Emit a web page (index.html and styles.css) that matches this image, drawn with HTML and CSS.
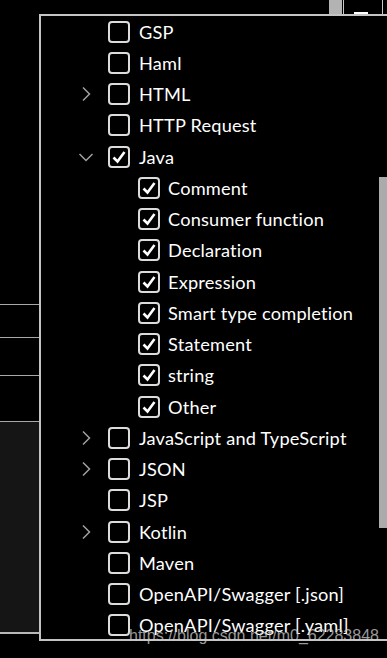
FILE: index.html
```html
<!DOCTYPE html>
<html>
<head>
<meta charset="utf-8">
<link rel="stylesheet" href="styles.css">
</head>
<body>
<div class="top">
  <span class="thumb-top"></span>
  <span class="vline"></span>
  <span class="minbar"></span>
  <span class="vline vline-r"></span>
</div>
<div class="main">
  <aside class="side">
    <div class="s s1"></div>
    <div class="s s2"></div>
    <div class="s s3"></div>
    <div class="s s4"></div>
    <div class="panel"></div>
  </aside>
  <div class="popup">
    <div class="row"><span class="chev"></span><span class="box"></span><span class="lbl">GSP</span></div>
    <div class="row"><span class="chev"></span><span class="box"></span><span class="lbl">Haml</span></div>
    <div class="row"><span class="chev"><svg width="10" height="16" viewBox="0 0 10 16"><path d="M2 1.5 L8.5 8 L2 14.5" fill="none" stroke="#a0a0a0" stroke-width="1.5"/></svg></span><span class="box"></span><span class="lbl">HTML</span></div>
    <div class="row"><span class="chev"></span><span class="box"></span><span class="lbl">HTTP Request</span></div>
    <div class="row"><span class="chev"><svg width="16" height="10" viewBox="0 0 16 10"><path d="M1.5 2 L8 8.5 L14.5 2" fill="none" stroke="#a0a0a0" stroke-width="1.5"/></svg></span><span class="box on"><svg width="18" height="18" viewBox="0 0 18 18"><path d="M3.5 9.5 L7.5 13.5 L14.5 4" fill="none" stroke="#fff" stroke-width="2.6"/></svg></span><span class="lbl">Java</span></div>
    <div class="row sub"><span class="box on"><svg width="18" height="18" viewBox="0 0 18 18"><path d="M3.5 9.5 L7.5 13.5 L14.5 4" fill="none" stroke="#fff" stroke-width="2.6"/></svg></span><span class="lbl">Comment</span></div>
    <div class="row sub"><span class="box on"><svg width="18" height="18" viewBox="0 0 18 18"><path d="M3.5 9.5 L7.5 13.5 L14.5 4" fill="none" stroke="#fff" stroke-width="2.6"/></svg></span><span class="lbl">Consumer function</span></div>
    <div class="row sub"><span class="box on"><svg width="18" height="18" viewBox="0 0 18 18"><path d="M3.5 9.5 L7.5 13.5 L14.5 4" fill="none" stroke="#fff" stroke-width="2.6"/></svg></span><span class="lbl">Declaration</span></div>
    <div class="row sub"><span class="box on"><svg width="18" height="18" viewBox="0 0 18 18"><path d="M3.5 9.5 L7.5 13.5 L14.5 4" fill="none" stroke="#fff" stroke-width="2.6"/></svg></span><span class="lbl">Expression</span></div>
    <div class="row sub"><span class="box on"><svg width="18" height="18" viewBox="0 0 18 18"><path d="M3.5 9.5 L7.5 13.5 L14.5 4" fill="none" stroke="#fff" stroke-width="2.6"/></svg></span><span class="lbl">Smart type completion</span></div>
    <div class="row sub"><span class="box on"><svg width="18" height="18" viewBox="0 0 18 18"><path d="M3.5 9.5 L7.5 13.5 L14.5 4" fill="none" stroke="#fff" stroke-width="2.6"/></svg></span><span class="lbl">Statement</span></div>
    <div class="row sub"><span class="box on"><svg width="18" height="18" viewBox="0 0 18 18"><path d="M3.5 9.5 L7.5 13.5 L14.5 4" fill="none" stroke="#fff" stroke-width="2.6"/></svg></span><span class="lbl">string</span></div>
    <div class="row sub"><span class="box on"><svg width="18" height="18" viewBox="0 0 18 18"><path d="M3.5 9.5 L7.5 13.5 L14.5 4" fill="none" stroke="#fff" stroke-width="2.6"/></svg></span><span class="lbl">Other</span></div>
    <div class="row"><span class="chev"><svg width="10" height="16" viewBox="0 0 10 16"><path d="M2 1.5 L8.5 8 L2 14.5" fill="none" stroke="#a0a0a0" stroke-width="1.5"/></svg></span><span class="box"></span><span class="lbl">JavaScript and TypeScript</span></div>
    <div class="row"><span class="chev"><svg width="10" height="16" viewBox="0 0 10 16"><path d="M2 1.5 L8.5 8 L2 14.5" fill="none" stroke="#a0a0a0" stroke-width="1.5"/></svg></span><span class="box"></span><span class="lbl">JSON</span></div>
    <div class="row"><span class="chev"></span><span class="box"></span><span class="lbl">JSP</span></div>
    <div class="row"><span class="chev"><svg width="10" height="16" viewBox="0 0 10 16"><path d="M2 1.5 L8.5 8 L2 14.5" fill="none" stroke="#a0a0a0" stroke-width="1.5"/></svg></span><span class="box"></span><span class="lbl">Kotlin</span></div>
    <div class="row"><span class="chev"></span><span class="box"></span><span class="lbl">Maven</span></div>
    <div class="row"><span class="chev"></span><span class="box"></span><span class="lbl">OpenAPI/Swagger [.json]</span></div>
    <div class="row"><span class="chev"></span><span class="box"></span><span class="lbl">OpenAPI/Swagger [.yaml]</span></div>
    <div class="scroll"></div>
  </div>
</div>
<div class="wm">https://blog.csdn.net/m0_62283848</div>
</body>
</html>
```
FILE: styles.css
```css
html, body {
  margin: 0;
  padding: 0;
  background: #000;
}
body {
  width: 387px;
  height: 658px;
  overflow: hidden;
  position: relative;
  font-family: Lato, "Noto Sans", sans-serif;
  color: #fff;
}
.top {
  height: 14px;
  display: flex;
  padding-left: 329px;
}
.thumb-top {
  width: 13px;
  height: 14px;
  background: #b3b3b3;
}
.vline {
  width: 1px;
  height: 14px;
  margin-left: 1px;
  background: #c8c8c8;
}
.vline-r {
  margin-left: 14px;
}
.minbar {
  width: 14px;
  height: 2px;
  margin-left: 10px;
  margin-top: 12px;
  background: #fff;
}
.main {
  display: flex;
  align-items: flex-start;
}
.side {
  width: 39px;
  flex: none;
}
.s {
  border-bottom: 1px solid #a8a8a8;
}
.s1 { height: 290px; }
.s2 { height: 32px; }
.s3 { height: 37px; }
.s4 { height: 45px; }
.panel {
  height: 210px;
  background: #151515;
  border-bottom: 2px solid #b8b8b8;
}
.popup {
  position: relative;
  flex: 1;
  height: 623px;
  border-top: 2px solid #c4c4c4;
  border-left: 2px solid #c4c4c4;
  border-bottom: 2px solid #c4c4c4;
  overflow: hidden;
}
.row {
  height: 31.25px;
  display: flex;
  align-items: center;
  padding-left: 33px;
  font-size: 18.2px;
  letter-spacing: 0.2px;
  white-space: nowrap;
}
.row.sub {
  padding-left: 97px;
}
.row.sub .box {
  margin-right: 8px;
}
.chev {
  width: 24px;
  height: 24px;
  display: flex;
  align-items: center;
  justify-content: center;
  margin-right: 10px;
}
.box {
  width: 18px;
  height: 18px;
  border: 2px solid #dcdcdc;
  border-radius: 4px;
  display: flex;
  align-items: center;
  justify-content: center;
  margin-right: 9px;
  flex: none;
}
.box svg { display: block; }
.lbl {
  line-height: 1;
}
.scroll {
  position: absolute;
  right: 0;
  top: 161px;
  width: 8px;
  height: 351px;
  background: #ababab;
}
.wm {
  position: absolute;
  left: 129px;
  top: 627px;
  font-family: "Liberation Sans", Arial, sans-serif;
  font-size: 16px;
  color: rgba(205, 205, 205, 0.75);
  white-space: nowrap;
}
```
